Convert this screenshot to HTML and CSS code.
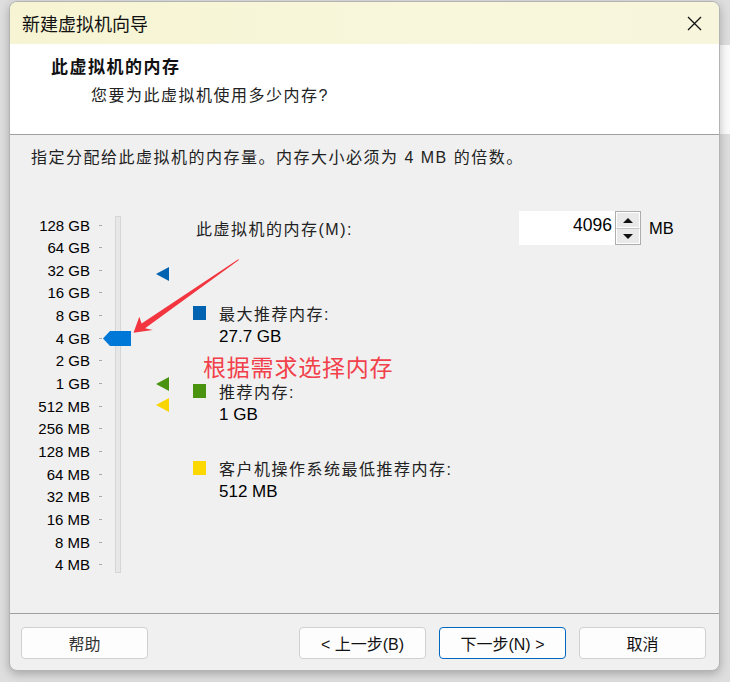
FILE: index.html
```html
<!DOCTYPE html>
<html lang="zh-CN">
<head>
  <meta charset="UTF-8">
  <title>新建虚拟机向导</title>
  <link rel="stylesheet" href="styles.css">
</head>
<body>
  <div class="dialog">
    <div class="titlebar">
      <span class="title">新建虚拟机向导</span>
      <span class="close">
        <svg width="15" height="15" viewBox="0 0 15 15"><path d="M1 1 L14 14 M14 1 L1 14" stroke="#111" stroke-width="1.3" fill="none"/></svg>
      </span>
    </div>

    <div class="header">
      <div class="h-title">此虚拟机的内存</div>
      <div class="h-sub">您要为此虚拟机使用多少内存?</div>
    </div>

    <div class="content">
      <p class="intro">指定分配给此虚拟机的内存量。内存大小必须为 4 MB 的倍数。</p>

      <div class="main">
        <div class="slider">
          <div class="scale">
            <div class="row"><span class="lbl">128 GB</span><i class="tick"></i></div>
            <div class="row"><span class="lbl">64 GB</span><i class="tick"></i></div>
            <div class="row"><span class="lbl">32 GB</span><i class="tick"></i></div>
            <div class="row"><span class="lbl">16 GB</span><i class="tick"></i></div>
            <div class="row"><span class="lbl">8 GB</span><i class="tick"></i></div>
            <div class="row"><span class="lbl">4 GB</span><i class="tick"></i></div>
            <div class="row"><span class="lbl">2 GB</span><i class="tick"></i></div>
            <div class="row"><span class="lbl">1 GB</span><i class="tick"></i></div>
            <div class="row"><span class="lbl">512 MB</span><i class="tick"></i></div>
            <div class="row"><span class="lbl">256 MB</span><i class="tick"></i></div>
            <div class="row"><span class="lbl">128 MB</span><i class="tick"></i></div>
            <div class="row"><span class="lbl">64 MB</span><i class="tick"></i></div>
            <div class="row"><span class="lbl">32 MB</span><i class="tick"></i></div>
            <div class="row"><span class="lbl">16 MB</span><i class="tick"></i></div>
            <div class="row"><span class="lbl">8 MB</span><i class="tick"></i></div>
            <div class="row"><span class="lbl">4 MB</span><i class="tick"></i></div>
          </div>
          <div class="track"></div>
          <div class="thumb"></div>
          <div class="mark mark-max"></div>
          <div class="mark mark-rec"></div>
          <div class="mark mark-min"></div>
        </div>

        <div class="info">
          <div class="memrow">
            <span class="mem-label">此虚拟机的内存(M):</span>
            <div class="spin">
              <span class="spin-value">4096</span>
              <div class="spin-btns">
                <span class="spin-btn"><i class="arr-up"></i></span>
                <span class="spin-btn"><i class="arr-down"></i></span>
              </div>
            </div>
            <span class="unit">MB</span>
          </div>

          <div class="legend">
            <div class="item">
              <div class="item-head"><i class="sq sq-max"></i><span>最大推荐内存:</span></div>
              <div class="item-value">27.7 GB</div>
            </div>
            <div class="item">
              <div class="item-head"><i class="sq sq-rec"></i><span>推荐内存:</span></div>
              <div class="item-value">1 GB</div>
            </div>
            <div class="item">
              <div class="item-head"><i class="sq sq-min"></i><span>客户机操作系统最低推荐内存:</span></div>
              <div class="item-value">512 MB</div>
            </div>
          </div>
        </div>
      </div>
    </div>

    <div class="footer">
      <button class="btn btn-help">帮助</button>
      <button class="btn">&lt; 上一步(B)</button>
      <button class="btn btn-primary">下一步(N) &gt;</button>
      <button class="btn">取消</button>
    </div>
  </div>

  <!-- annotation drawn over the screenshot -->
  <div class="note">根据需求选择内存</div>
  <svg class="arrow" width="730" height="682" viewBox="0 0 730 682">
    <polygon points="133.5,332.7 139.3,316.7 141.6,323.4 238.3,259.2 238.9,260 145.1,328.3 152.7,330" fill="#f2353f"/>
  </svg>
</body>
</html>
```

FILE: styles.css
```css
body {
  margin: 0;
  width: 730px;
  height: 682px;
  overflow: hidden;
  position: relative;
  background: linear-gradient(#fbfbfb, #fbfbfb) no-repeat 720px 45px / 10px 89px, #dedede;
  font-family: "Liberation Sans", "Noto Sans CJK SC", sans-serif;
  color: #111;
}

.dialog {
  box-sizing: border-box;
  width: 711px;
  height: 670px;
  margin: 1px 0 0 9px;
  border: 1px solid #b4b4b4;
  border-radius: 8px;
  overflow: hidden;
  background: #f0f0f0;
  box-shadow: 0 3px 10px rgba(0, 0, 0, 0.25);
  display: flex;
  flex-direction: column;
}

.titlebar {
  height: 42px;
  flex: none;
  display: flex;
  align-items: center;
  padding: 0 17px 0 12px;
  background: linear-gradient(90deg, #f6f4d2, #f8f7dc 60%, #f7f6dc);
}

.title {
  font-size: 18px;
  flex: 1;
}

.close {
  display: flex;
}

.header {
  height: 90px;
  flex: none;
  background: #fff;
  border-bottom: 1px solid #a0a0a0;
  padding: 12px 0 0 41px;
  box-sizing: border-box;
  height: 91px;
}

.h-title {
  font-size: 17px;
  font-weight: bold;
  letter-spacing: 1.5px;
  line-height: 24px;
}

.h-sub {
  margin-top: 4px;
  padding-left: 40px;
  font-size: 16px;
  letter-spacing: 1.5px;
  line-height: 24px;
  color: #222;
}

.content {
  height: 478px;
  flex: none;
  padding-top: 13px;
  box-sizing: border-box;
}

.intro {
  margin: 0 0 0 21px;
  font-size: 16px;
  letter-spacing: 1.5px;
  line-height: 20px;
  color: #222;
}

.main {
  display: flex;
  margin-top: 43px;
}

.slider {
  position: relative;
  width: 183px;
  height: 363px;
  display: flex;
  flex: none;
}

.scale {
  padding-top: 2.7px;
}

.row {
  height: 22.667px;
  display: flex;
  align-items: center;
}

.lbl {
  width: 80px;
  text-align: right;
  font-size: 15px;
  color: #000;
}

.tick {
  width: 3px;
  height: 1px;
  margin-left: 9px;
  background: #a8a8a8;
}

.track {
  margin: 5px 0 0 13px;
  width: 4px;
  height: 355px;
  border: 1px solid #d6d6d6;
  background: #e7e7e7;
}

.thumb {
  position: absolute;
  left: 93px;
  top: 120px;
  width: 28px;
  height: 15px;
  background: #0078d7;
  clip-path: polygon(0 50%, 25% 0, 100% 0, 100% 100%, 25% 100%);
}

.mark {
  position: absolute;
  left: 146px;
  width: 13px;
  height: 14px;
  clip-path: polygon(0 50%, 100% 0, 100% 100%);
}

.mark-max { top: 56px; background: #0063b1; }
.mark-rec { top: 166px; background: #4a930f; }
.mark-min { top: 187px; background: #f9d500; }

.info {
  flex: 1;
}

.memrow {
  display: flex;
  align-items: center;
  height: 34px;
  margin-left: 3px;
}

.mem-label {
  width: 323px;
  font-size: 16px;
  letter-spacing: 1.5px;
  color: #222;
}

.spin {
  display: flex;
  width: 122px;
  height: 34px;
}

.spin-value {
  flex: 1;
  background: #fff;
  text-align: right;
  font-size: 17.5px;
  line-height: 28px;
  padding-right: 3px;
  color: #000;
}

.spin-btns {
  width: 26px;
  box-sizing: border-box;
  border: 1px solid #adadad;
  display: flex;
  flex-direction: column;
}

.spin-btn {
  flex: 1;
  display: flex;
  align-items: center;
  justify-content: center;
  background: #e9e9e9;
  border: 1px solid #fff;
}

.spin-btn + .spin-btn {
  border-top: 1px solid #c4c4c4;
}

.arr-up,
.arr-down {
  width: 0;
  height: 0;
  border-left: 5px solid transparent;
  border-right: 5px solid transparent;
}

.arr-up { border-bottom: 5px solid #111; }
.arr-down { border-top: 5px solid #111; }

.unit {
  margin-left: 8px;
  font-size: 16.5px;
  color: #000;
}

.legend {
  margin-top: 56px;
  display: flex;
  flex-direction: column;
  gap: 29.5px;
}

.item-head {
  display: flex;
  align-items: center;
  height: 24px;
  font-size: 16px;
  letter-spacing: 1.5px;
  color: #222;
}

.sq {
  width: 13px;
  height: 14px;
  margin-right: 13px;
}

.sq-max { background: #0063b1; }
.sq-rec { background: #4a930f; }
.sq-min { background: #fcd800; }

.item-value {
  padding-left: 26px;
  line-height: 24px;
  font-size: 17px;
  color: #000;
}

.footer {
  flex: 1;
  border-top: 1px solid #a0a0a0;
  display: flex;
  gap: 13px;
  padding: 13px 13px 0 11px;
}

.btn {
  width: 127px;
  height: 32px;
  background: #fdfdfd;
  border: 1px solid #d0d0d0;
  border-radius: 4px;
  font-family: "Liberation Sans", "Noto Sans CJK SC", sans-serif;
  font-size: 16px;
  color: #111;
  padding: 0;
}

.btn-help {
  margin-right: auto;
  color: #333;
}

.btn-primary {
  border-color: #0067c0;
}

.note {
  position: absolute;
  left: 203px;
  top: 353px;
  font-size: 23px;
  line-height: 30px;
  letter-spacing: 0.8px;
  color: #f2404a;
}

.arrow {
  position: absolute;
  left: 0;
  top: 0;
  pointer-events: none;
}
```
